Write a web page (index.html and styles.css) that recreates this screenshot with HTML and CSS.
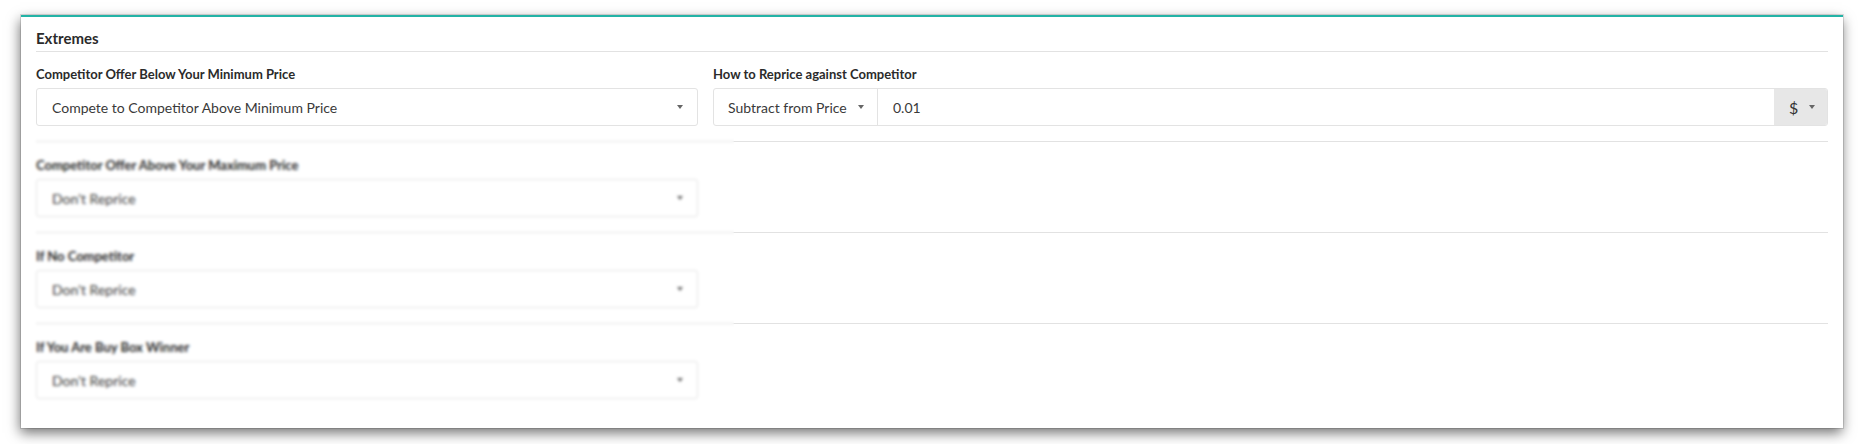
FILE: index.html
```html
<!DOCTYPE html>
<html lang="en">
<head>
<meta charset="utf-8">
<title>Extremes</title>
<link rel="stylesheet" href="styles.css">
</head>
<body>
<div class="page">
  <section class="card">
    <h2 class="card-title">Extremes</h2>
    <div class="card-body">
      <div class="row first">
        <div class="field">
          <label class="label">Competitor Offer Below Your Minimum Price</label>
          <div class="select"><span class="select-text">Compete to Competitor Above Minimum Price</span><span class="caret"></span></div>
        </div>
        <div class="field">
          <label class="label">How to Reprice against Competitor</label>
          <div class="input-group">
            <div class="ig-select"><span>Subtract from Price</span><span class="caret"></span></div>
            <div class="ig-input">0.01</div>
            <div class="ig-addon"><span class="dollar">$</span><span class="caret"></span></div>
          </div>
        </div>
      </div>
      <div class="row">
        <div class="field">
          <label class="label">Competitor Offer Above Your Maximum Price</label>
          <div class="select"><span class="select-text">Don't Reprice</span><span class="caret"></span></div>
        </div>
      </div>
      <div class="row">
        <div class="field">
          <label class="label">If No Competitor</label>
          <div class="select"><span class="select-text">Don't Reprice</span><span class="caret"></span></div>
        </div>
      </div>
      <div class="row last">
        <div class="field">
          <label class="label">If You Are Buy Box Winner</label>
          <div class="select"><span class="select-text">Don't Reprice</span><span class="caret"></span></div>
        </div>
      </div>
    </div>
    <div class="blur-mask"></div>
  </section>
</div>
</body>
</html>
```

FILE: styles.css
```css
* { box-sizing: border-box; }
html, body { margin: 0; padding: 0; background: #ffffff; }
body {
  font-family: Lato, "Open Sans", "Liberation Sans", sans-serif;
  color: #333;
  width: 1858px;
  height: 444px;
  overflow: hidden;
}
.page {
  padding: 15px 15px 16px 21px;
}
.card {
  position: relative;
  background: #fff;
  border-top: 2px solid #23b3a6;
  height: 413px;
  box-shadow: 0 0 0 1px rgba(0,0,0,0.12), -1px 5px 12px rgba(0,0,0,0.55);
}
.card-title {
  margin: 0 15px;
  padding: 11px 0 3px;
  font-size: 15px;
  line-height: 20px;
  font-weight: 700;
  color: #2b2b2b;
  border-bottom: 1px solid #e2e2e2;
}
.card-body {
  margin: 0 15px;
}
.row {
  display: grid;
  grid-template-columns: 662px 1fr;
  column-gap: 15px;
  padding: 15px 0 15px;
  border-bottom: 1px solid #e2e2e2;
}
.row.first { padding-top: 14px; }
.row.last { border-bottom: none; }
.label {
  display: block;
  font-size: 13px;
  line-height: 16px;
  font-weight: 700;
  color: #2b2b2b;
  margin-bottom: 6px;
}
.select {
  height: 38px;
  border: 1px solid #e3e3e3;
  border-radius: 3px;
  display: flex;
  align-items: center;
  justify-content: space-between;
  padding: 0 14px 0 15px;
  font-size: 14px;
  color: #3a3a3a;
}
.caret {
  display: inline-block;
  width: 0;
  height: 0;
  border-left: 3.5px solid transparent;
  border-right: 3.5px solid transparent;
  border-top: 4px solid #666;
}
.input-group {
  height: 38px;
  border: 1px solid #e3e3e3;
  border-radius: 3px;
  display: flex;
  align-items: stretch;
  overflow: hidden;
  font-size: 14px;
  color: #3a3a3a;
}
.ig-select {
  width: 164px;
  border-right: 1px solid #e3e3e3;
  display: flex;
  align-items: center;
  gap: 11px;
  padding-left: 14px;
}
.ig-input {
  flex: 1;
  display: flex;
  align-items: center;
  padding-left: 15px;
}
.ig-addon {
  width: 53px;
  background: #e7e7e7;
  display: flex;
  align-items: center;
  padding-left: 15px;
  gap: 11px;
}
.dollar {
  font-size: 16px;
  color: #333;
}
.blur-mask {
  position: absolute;
  left: 1px;
  top: 116px;
  width: 712px;
  bottom: 0;
  backdrop-filter: blur(1.6px);
  -webkit-backdrop-filter: blur(1.6px);
}
```
